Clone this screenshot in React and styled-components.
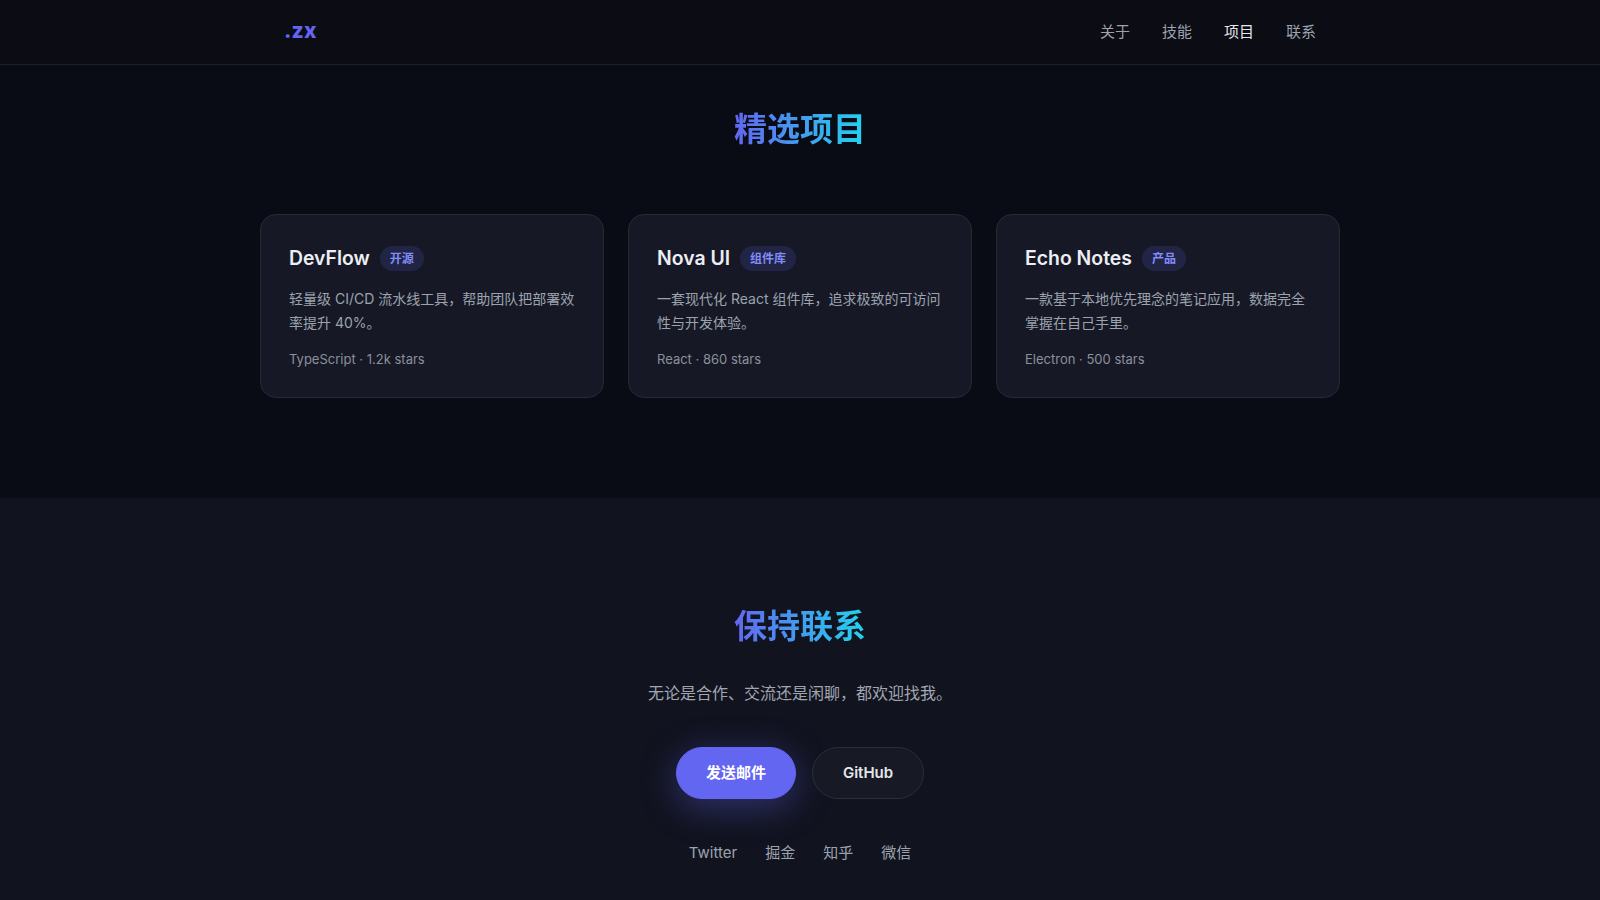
import React from "react";
import styled, { createGlobalStyle } from "styled-components";

const Global = createGlobalStyle`
  * { box-sizing: border-box; }
  html, body { margin: 0; padding: 0; }
  body {
    background: #11131f;
    font-family: Inter, "Noto Sans CJK SC", sans-serif;
    color: #e5e7eb;
    -webkit-font-smoothing: antialiased;
  }
`;

const Header = styled.header`
  height: 65px;
  background: #0b0c14;
  border-bottom: 1px solid #1d2029;
`;

const HeaderInner = styled.div`
  max-width: 1080px;
  height: 100%;
  margin: 0 auto;
  padding: 0 24px 3px;
  display: flex;
  align-items: center;
  justify-content: space-between;
`;

const Logo = styled.a`
  font-size: 21px;
  font-weight: 800;
  color: #6366f1;
  letter-spacing: 0.2px;
  text-decoration: none;
`;

const Nav = styled.nav`
  display: flex;
  gap: 32px;
`;

const NavLink = styled.a`
  font-size: 15px;
  color: ${(p) => (p.$active ? "#e5e7eb" : "#9ca3af")};
  text-decoration: none;
`;

const ProjectsSection = styled.section`
  background: #0a0c15;
  padding: 45px 24px 100px;
`;

const Container = styled.div`
  max-width: 1080px;
  margin: 0 auto;
  display: flex;
  flex-direction: column;
  align-items: center;
`;

const SectionTitle = styled.h2`
  margin: 0 0 ${(p) => p.$mb}px;
  font-size: 33px;
  line-height: 1.2;
  font-weight: 700;
  background: linear-gradient(90deg, #6366f1, #22d3ee);
  -webkit-background-clip: text;
  background-clip: text;
  color: transparent;
  display: inline-block;
`;

const Grid = styled.div`
  width: 100%;
  display: grid;
  grid-template-columns: repeat(3, 1fr);
  gap: 24px;
`;

const Card = styled.article`
  background: #161925;
  border: 1px solid #262a37;
  border-radius: 16px;
  padding: 28px;
`;

const CardHead = styled.div`
  display: flex;
  align-items: center;
  gap: 10px;
  min-height: 32px;
  margin-bottom: 12px;
`;

const CardTitle = styled.h3`
  margin: 0;
  font-size: 19.4px;
  line-height: 1.3;
  font-weight: 600;
  color: #eceef3;
`;

const Badge = styled.span`
  font-size: 12px;
  line-height: 17px;
  font-weight: 600;
  padding: 4px 10px;
  border-radius: 999px;
  background: rgba(99, 102, 241, 0.16);
  color: #818cf8;
`;

const Desc = styled.p`
  margin: 0 0 14px;
  font-size: 14px;
  line-height: 1.75;
  color: #9ca3af;
`;

const Meta = styled.div`
  font-size: 13px;
  line-height: 1.5;
  color: #8b909c;
`;

const ContactSection = styled.section`
  background: #11131f;
  padding: 109px 24px 60px;
`;

const Subtitle = styled.p`
  margin: 0 0 41px;
  font-size: 16px;
  line-height: 1.6;
  color: #a1a6b2;
`;

const Buttons = styled.div`
  display: flex;
  gap: 16px;
  margin-bottom: 43px;
`;

const Button = styled.a`
  display: inline-flex;
  align-items: center;
  justify-content: center;
  padding: 15px ${(p) => (p.$primary ? 29 : 30)}px;
  font-size: 15px;
  line-height: 20px;
  font-weight: ${(p) => (p.$primary ? 700 : 600)};
  border-radius: 999px;
  text-decoration: none;
  border: 1px solid ${(p) => (p.$primary ? "#6366f1" : "#2a2d3a")};
  background: ${(p) => (p.$primary ? "#6366f1" : "#171a25")};
  color: ${(p) => (p.$primary ? "#ffffff" : "#e5e7eb")};
  box-shadow: ${(p) =>
    p.$primary ? "0 8px 36px rgba(99, 102, 241, 0.38)" : "none"};
`;

const Links = styled.div`
  display: flex;
  gap: 28px;
`;

const SocialLink = styled.a`
  font-size: 15px;
  line-height: 1.5;
  color: #9ca3af;
  text-decoration: none;
`;

const projects = [
  {
    name: "DevFlow",
    tag: "开源",
    desc: "轻量级 CI/CD 流水线工具，帮助团队把部署效率提升 40%。",
    meta: "TypeScript · 1.2k stars",
  },
  {
    name: "Nova UI",
    tag: "组件库",
    desc: "一套现代化 React 组件库，追求极致的可访问性与开发体验。",
    meta: "React · 860 stars",
  },
  {
    name: "Echo Notes",
    tag: "产品",
    desc: "一款基于本地优先理念的笔记应用，数据完全掌握在自己手里。",
    meta: "Electron · 500 stars",
  },
];

export default function App() {
  return (
    <>
      <Global />
      <Header>
        <HeaderInner>
          <Logo href="#">.zx</Logo>
          <Nav>
            <NavLink href="#">关于</NavLink>
            <NavLink href="#">技能</NavLink>
            <NavLink href="#" $active>项目</NavLink>
            <NavLink href="#">联系</NavLink>
          </Nav>
        </HeaderInner>
      </Header>
      <ProjectsSection>
        <Container>
          <SectionTitle $mb={64}>精选项目</SectionTitle>
          <Grid>
            {projects.map((p) => (
              <Card key={p.name}>
                <CardHead>
                  <CardTitle>{p.name}</CardTitle>
                  <Badge>{p.tag}</Badge>
                </CardHead>
                <Desc>{p.desc}</Desc>
                <Meta>{p.meta}</Meta>
              </Card>
            ))}
          </Grid>
        </Container>
      </ProjectsSection>
      <ContactSection>
        <Container>
          <SectionTitle $mb={34}>保持联系</SectionTitle>
          <Subtitle>无论是合作、交流还是闲聊，都欢迎找我。</Subtitle>
          <Buttons>
            <Button href="#" $primary>发送邮件</Button>
            <Button href="#">GitHub</Button>
          </Buttons>
          <Links>
            <SocialLink href="#">Twitter</SocialLink>
            <SocialLink href="#">掘金</SocialLink>
            <SocialLink href="#">知乎</SocialLink>
            <SocialLink href="#">微信</SocialLink>
          </Links>
        </Container>
      </ContactSection>
    </>
  );
}
